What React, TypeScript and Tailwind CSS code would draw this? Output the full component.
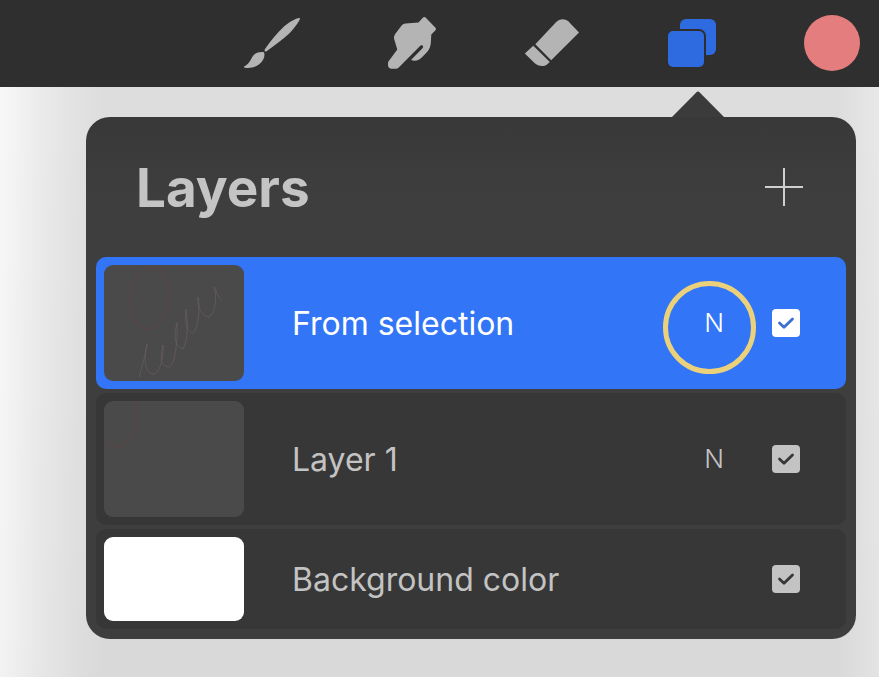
import { useState } from "react";
import type { ReactNode } from "react";

function BrushIcon() {
  return (
    <svg viewBox="0 0 56 56" className="size-14" fill="currentColor" aria-hidden="true">
      <path d="M56 3.2C54.500 2.200 48 5 40 11.500C33 18 26 26.500 20.700 34.500C20.200 35.500 21 36.800 22.200 36.400C30.500 30.500 38.500 25 45.500 18.300C51.500 11.800 56.300 5.300 56 3.200Z" />
      <path d="M19.500 37C16 36.600 13 37.300 10.500 39.300C7.500 41.800 7.500 44.500 5 47.500C3.500 49.500 2 50.500 .3 51.300C-.3 52 .2 52.500 1 52.700C6.500 53.600 12 52 15.500 49C19 46 21 42.500 20.300 38.500C20.200 37.700 20 37.200 19.500 37Z" />
    </svg>
  );
}

function SmudgeIcon() {
  return (
    <svg viewBox="0 0 56 56" className="size-14" fill="currentColor" aria-hidden="true">
      <path d="M38.800 2.700Q40.300 1.500 41.800 2.700L51.500 12.700Q52.500 14 51.500 15.300L47.300 19.500L46.800 28C46.500 31.500 45.500 34 43.300 36.700L37.500 42.800C34.500 45.800 30.500 46.300 27 45L38.500 33.300C40.200 31.200 38.300 29.200 36.300 30.700L14.500 52.800Q13.500 53.800 12 53.800H7.500C5.500 53.800 4 52 4 50V48.200Q4 47.200 4.600 46.200L13.300 34.500L10.200 24.300Q9.500 21.500 11 19.200L18 10Q19.300 8.500 21.500 8.400L34.500 7.500Z" />
    </svg>
  );
}

function EraserIcon() {
  return (
    <svg viewBox="0 0 56 56" className="size-14" fill="currentColor" aria-hidden="true">
      <path d="M11.300 29.300L32 7.300C35.500 3.700 40.500 3.300 44.500 6.500L55 17.400L27.200 45.300Z" />
      <path d="M9.300 30.700L.8 38.400L10.500 48C14 51.300 19.500 52 23 49.500L25.800 47Z" />
    </svg>
  );
}

function LayersIcon() {
  return (
    <svg viewBox="0 0 56 56" className="size-14" aria-hidden="true">
      <rect x="16" y="4" width="36" height="36" rx="6" fill="#2f6be0" />
      <rect x="2" y="14" width="40" height="40" rx="7" fill="#2e2e2e" />
      <rect x="4" y="16" width="36" height="36" rx="5" fill="#2f6be0" />
    </svg>
  );
}

function ToolButton({ label, children }: { label: string; children: ReactNode }) {
  return (
    <button type="button" aria-label={label} className="size-14 shrink-0 text-[#b4b4b4]">
      {children}
    </button>
  );
}

function SelectionSketch() {
  return (
    <svg viewBox="0 0 140 116" className="h-full w-full" fill="none" aria-hidden="true">
      <ellipse cx="46" cy="33" rx="20" ry="31" stroke="#5a4545" strokeWidth="2" opacity="0.6" transform="rotate(8 46 33)" />
      <path
        d="M35 112C38 101 42 88 43 79C38 100 44 109 49 109C56 109 60 91 59 80C54 98 60 102 65 102C71 101 74 74 73 58C68 78 74 82 79 84C84 76 84 54 82 44C80 60 84 68 89 68C95 63 96 42 94 32C93 44 99 52 105 52C112 48 113 30 110 22C113 27 114 34 118 35"
        stroke="#6b605e"
        strokeWidth="1"
        opacity="0.7"
      />
    </svg>
  );
}

function LayerSketch() {
  return (
    <svg viewBox="0 0 140 116" className="h-full w-full" fill="none" aria-hidden="true">
      <path d="M32 1C36 16 31 32 23 40C16 47 8 47 3 40" stroke="#5d4444" strokeWidth="2" opacity="0.6" />
    </svg>
  );
}

type LayerProps = {
  id: string;
  name: string;
  selected?: boolean;
  blend?: string;
  ringed?: boolean;
  thumb: string;
  children?: ReactNode;
};

function LayerRow({ id, name, selected, blend, ringed, thumb, children }: LayerProps) {
  const [visible, setVisible] = useState(true);
  return (
    <li
      className={`flex items-center rounded-[10px] py-2 pr-[46px] pl-2 ${
        selected ? "bg-[#3275f6] text-white" : "bg-[#373737] text-[#c3c3c3]"
      }`}
    >
      <div className={`w-[140px] shrink-0 overflow-hidden rounded-[9px] ${thumb}`}>{children}</div>
      <label htmlFor={id} className="ml-12 flex-1 pt-0.5 text-[32px] leading-10 font-normal whitespace-nowrap">
        {name}
      </label>
      {blend && (
        <button type="button" aria-label={`Blend mode ${blend}`} className="relative mr-10 size-9 text-[26px] leading-9 font-light">
          {blend}
          {ringed && (
            <span className="absolute -top-6 -left-[33px] size-[93px] rounded-full border-[5px] border-[#ead17a]" />
          )}
        </button>
      )}
      <span className="grid size-7 shrink-0">
        <input
          id={id}
          type="checkbox"
          checked={visible}
          onChange={() => setVisible(!visible)}
          className="col-start-1 row-start-1 size-7 appearance-none rounded-[4px] bg-current"
        />
        {visible && (
          <svg
            viewBox="0 0 28 28"
            className={`pointer-events-none col-start-1 row-start-1 size-7 ${selected ? "text-[#3b6fd0]" : "text-[#373737]"}`}
            fill="none"
            stroke="currentColor"
            strokeWidth="2.800"
            strokeLinecap="round"
            strokeLinejoin="round"
            aria-hidden="true"
          >
            <path d="M7.500 14L12 18.300L20.500 10" />
          </svg>
        )}
      </span>
    </li>
  );
}

export default function App() {
  return (
    <div className="flex min-h-screen flex-col bg-[#dcdcdc] font-['Inter','Liberation_Sans',sans-serif]">
      <header className="flex h-[87px] items-center justify-end gap-[84px] bg-[#2f2f2f] pr-[19px] pb-0.5">
        <ToolButton label="Brush"><BrushIcon /></ToolButton>
        <ToolButton label="Smudge"><SmudgeIcon /></ToolButton>
        <ToolButton label="Eraser"><EraserIcon /></ToolButton>
        <ToolButton label="Layers"><LayersIcon /></ToolButton>
        <button type="button" aria-label="Color" className="size-14 shrink-0 rounded-full bg-[#e47e7e]" />
      </header>
      <main className="flex-1 overflow-hidden bg-[linear-gradient(180deg,rgba(0,0,0,0),rgba(0,0,0,0.02)),linear-gradient(90deg,#f8f8f8_0px,#ebebeb_40px,#e1e1e1_80px,#dddddd_105px,#dddddd_calc(100%-40px),#e8e8e8_100%)] pt-[30px] pr-[23px] pb-[38px] pl-[86px]">
        <section className="relative rounded-3xl bg-[#3e3e3e] bg-linear-to-b from-[#383838] to-[#3e3e3e] to-15% px-[10px] pb-[10px]">
          <svg viewBox="0 0 52 26" className="absolute -top-[26px] right-[132px] h-[26px] w-[52px]" aria-hidden="true">
            <path d="M0 26L25 .8Q26 0 27 .8L52 26Z" fill="#3b3b3b" />
          </svg>
          <div className="flex h-[140px] items-center justify-between pr-[38px] pl-10">
            <h1 className="pt-0.5 text-[53px] leading-none font-bold text-[#c4c4c4]">Layers</h1>
            <button type="button" aria-label="Add layer" className="size-12 text-[#cfcfcf]">
              <svg viewBox="0 0 48 48" className="size-12" stroke="currentColor" strokeWidth="2" aria-hidden="true">
                <path d="M24 5V43M5 24H43" />
              </svg>
            </button>
          </div>
          <ul className="flex flex-col gap-1">
            <LayerRow id="from-selection" name="From selection" selected blend="N" ringed thumb="h-[116px] bg-[#4a4a4a]">
              <SelectionSketch />
            </LayerRow>
            <LayerRow id="layer-1" name="Layer 1" blend="N" thumb="h-[116px] bg-[#4a4a4a]">
              <LayerSketch />
            </LayerRow>
            <LayerRow id="background" name="Background color" thumb="h-[84px] bg-white" />
          </ul>
        </section>
      </main>
    </div>
  );
}
